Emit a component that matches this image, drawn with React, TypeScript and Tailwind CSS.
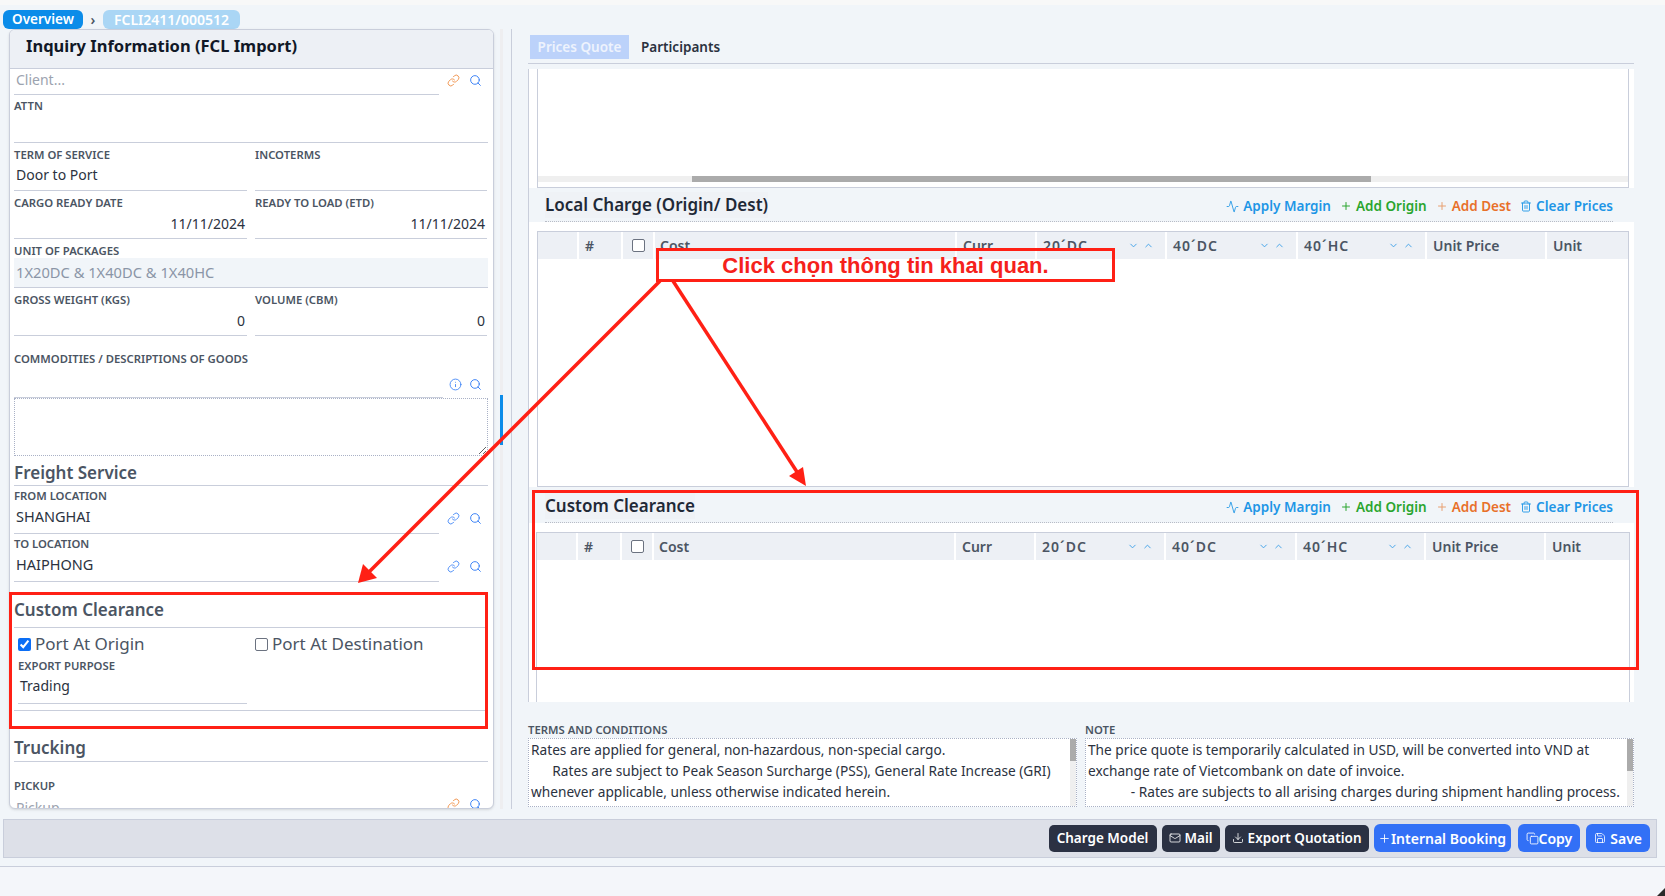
import { Activity, ChevronDown, ChevronUp, Copy, Download, Info, Link, Mail, Plus, Save, Search, Trash2 } from "lucide-react";

const labelCls = "block text-[11.3px] leading-[14px] font-semibold uppercase text-[#4b5563]";
const valueCls = "px-[2px] text-[14px] leading-[20px] text-[#2b3240]";
const titleCls = "text-[17px] leading-[24px] font-semibold text-[#4b5563]";
const cols = "grid grid-cols-[41px_42px_34px_300px_80px_130px_131px_129px_120px_83px]";

function Field({ label, value, right }: { label: string; value?: string; right?: boolean }) {
  return (
    <div className={`h-[48px] border-b border-[#c9cedb] flex flex-col justify-between pt-[5px] ${right ? "pb-[4px]" : "pb-[5px]"}`}>
      <label className={labelCls}>{label}</label>
      <div className={`${valueCls} ${right ? "text-right" : ""}`}>{value}</div>
    </div>
  );
}

function LocationField({ label, value }: { label: string; value: string }) {
  return (
    <div className="flex">
      <div className="w-[425px] h-[48px] border-b border-[#c9cedb] flex flex-col justify-between pt-[3px] pb-[7px]">
        <label className={labelCls}>{label}</label>
        <div className="px-[2px] text-[14.5px] leading-[20px] text-[#2b3240]">{value}</div>
      </div>
      <div className="flex-1 flex items-end justify-center gap-[9px] pb-[9px] pl-[2px] text-[#3b82f6]">
        <Link size={13} strokeWidth={1.6} />
        <Search size={13} strokeWidth={1.8} />
      </div>
    </div>
  );
}

function ContainerHead({ label }: { label: string }) {
  return (
    <div className="flex items-center justify-between pl-[6px] pr-[11px] border-l-2 border-white h-full">
      <span className="tracking-[1px]">{label}</span>
      <span className="flex gap-[4px] text-[#3b9fe8]">
        <ChevronDown size={11} strokeWidth={2} />
        <ChevronUp size={11} strokeWidth={2} />
      </span>
    </div>
  );
}

function SectionHeader({ title }: { title: string }) {
  return (
    <div className="h-[34px] shrink-0 bg-[#f1f5f9] pl-[16px] pr-[21px]">
      <div className="h-full flex items-center justify-between border-b border-dotted border-[#b8bcc6]">
        <h3 className="text-[17px] font-semibold text-[#1f2937] bg-[#eff2f6] leading-[26px]">{title}</h3>
        <div className="flex items-center gap-[9px] text-[13.5px] font-semibold pt-[3px]">
          <span className="flex items-center gap-[4px] text-[#1e96e6]"><Activity size={13} strokeWidth={1.6} />Apply Margin</span>
          <span className="flex items-center gap-[4px] text-[#2aa52e]"><Plus size={12} strokeWidth={2} />Add Origin</span>
          <span className="flex items-center gap-[4px] text-[#e8702a]"><Plus size={12} strokeWidth={2} className="text-[#e8a070]" />Add Dest</span>
          <span className="flex items-center gap-[4px] text-[#1e96e6]"><Trash2 size={12} strokeWidth={1.8} />Clear Prices</span>
        </div>
      </div>
    </div>
  );
}

function ChargeTable() {
  return (
    <div className={`${cols} h-[28px] shrink-0 bg-[#edf0f5] border-t border-[#c9cedb] items-center text-[14px] font-semibold text-[#4b5563]`}>
      <div className="h-full border-r-2 border-white" />
      <div className="pl-[6px]">#</div>
      <div className="h-full flex items-center justify-center border-x-2 border-white">
        <input type="checkbox" className="w-[13px] h-[13px] appearance-none rounded-[2px] border border-[#6b7280] bg-white" />
      </div>
      <div className="pl-[5px]">Cost</div>
      <div className="h-full flex items-center pl-[6px] border-l-2 border-white">Curr</div>
      <ContainerHead label="20´DC" />
      <ContainerHead label="40´DC" />
      <ContainerHead label="40´HC" />
      <div className="h-full flex items-center pl-[6px] border-l-2 border-white">Unit Price</div>
      <div className="h-full flex items-center pl-[6px] border-l-2 border-white">Unit</div>
    </div>
  );
}

function NoteBox({ label, thumb, children }: { label: string; thumb: string; children: React.ReactNode }) {
  return (
    <div className="w-[549px]">
      <label className={labelCls}>{label}</label>
      <div className="h-[69px] mt-[1px] flex bg-white border border-dotted border-[#a9b1c6] overflow-hidden">
        <div className="flex-1 px-[2px] text-[13.7px] leading-[21px] text-[#2b3240] whitespace-pre-wrap">{children}</div>
        <div className="w-[6px] bg-[#efefef] relative">
          <div className={`${thumb} bg-[#ababab]`} />
        </div>
      </div>
    </div>
  );
}

function DarkBtn({ children, className = "" }: { children: React.ReactNode; className?: string }) {
  return <button className={`h-[27px] px-[7px] rounded-[5px] bg-[#2b3143] text-white text-[13.5px] font-semibold flex items-center justify-center gap-[4px] whitespace-nowrap ${className}`}>{children}</button>;
}

function BlueBtn({ children, className = "" }: { children: React.ReactNode; className?: string }) {
  return <button className={`h-[28px] px-[8px] rounded-[6px] bg-[#3270f6] text-white text-[14px] font-semibold flex items-center whitespace-nowrap ${className}`}>{children}</button>;
}

export default function App() {
  return (
    <div className="relative w-full h-[896px] overflow-hidden bg-[#f1f5f9] font-['Noto_Sans',sans-serif]">
      <div className="h-[5px] bg-[#f8f8f8]" />

      {/* breadcrumb */}
      <div className="h-[19px] mt-[5px] pl-[3px] flex items-center text-[13.5px] font-semibold">
        <span className="h-[19px] w-[80px] rounded-[6px] bg-[#0b8ce9] text-white flex items-center justify-center">Overview</span>
        <span className="w-[20px] text-center text-[#4b5563] text-[14px]">›</span>
        <span className="h-[19px] w-[137px] rounded-[6px] bg-[#aad6f5] text-white text-[14px] flex items-center justify-center">FCLI2411/000512</span>
      </div>

      <div className="flex h-[780px]">
        {/* left card */}
        <div className="ml-[9px] w-[485px] shrink-0 bg-white border border-[#c9cedb] rounded-[6px] overflow-hidden shadow-sm">
          <div className="h-[39px] bg-[#edf0f5] border-b border-[#c9cedb] pl-[16px] pb-[5px] flex items-center">
            <h2 className="text-[16.5px] font-bold text-[#111827]">Inquiry Information (FCL Import)</h2>
          </div>
          <div className="px-[4px] pr-[5px]">
            <div className="flex">
              <div className="w-[425px] h-[26px] border-b border-[#c9cedb] px-[2px] text-[14px] leading-[21px] text-[#9ca3af]">Client...</div>
              <div className="flex-1 flex justify-center items-center gap-[9px] pl-[2px] pb-[3px] text-[#3b82f6]">
                <Link size={13} strokeWidth={1.6} className="text-[#ef8a3c]" />
                <Search size={13} strokeWidth={1.8} />
              </div>
            </div>
            <div className="h-[48px] border-b border-[#c9cedb] pt-[4px]">
              <label className={labelCls}>ATTN</label>
            </div>
            <div className="grid grid-cols-[233px_232px] gap-x-[8px]">
              <Field label="Term Of Service" value="Door to Port" />
              <Field label="Incoterms" />
              <Field label="Cargo Ready Date" value="11/11/2024" right />
              <Field label="Ready To Load (ETD)" value="11/11/2024" right />
            </div>
            <div className="h-[49px] pt-[5px]">
              <label className={labelCls}>Unit Of Packages</label>
              <div className="h-[30px] bg-[#f1f5f9] border-b border-[#c9cedb] px-[2px] text-[14.7px] leading-[29px] text-[#8b95a7]">1X20DC &amp; 1X40DC &amp; 1X40HC</div>
            </div>
            <div className="grid grid-cols-[233px_232px] gap-x-[8px]">
              <Field label="Gross Weight (KGS)" value="0" right />
              <Field label="Volume (CBM)" value="0" right />
            </div>
            <div className="h-[121px] pt-[16px]">
              <label className={labelCls}>Commodities / Descriptions Of Goods</label>
              <div className="flex h-[32px]">
                <div className="w-[429px] border-b border-[#c9cedb]" />
                <div className="flex-1 flex items-start justify-center gap-[7px] pt-[12px] text-[#3b82f6]">
                  <Info size={13} strokeWidth={1.6} />
                  <Search size={13} strokeWidth={1.8} />
                </div>
              </div>
              <textarea className="block w-full h-[58px] border border-dotted border-[#a9b1c6] outline-none" />
            </div>
            <h4 className={`${titleCls} h-[29px] pt-[4px] border-b border-[#c9cedb]`}>Freight Service</h4>
            <LocationField label="From Location" value="SHANGHAI" />
            <LocationField label="To Location" value="HAIPHONG" />
            <h4 className={`${titleCls} h-[46px] pt-[16px] border-b border-[#c9cedb]`}>Custom Clearance</h4>
            <div className="h-[83px] border-b border-[#c9cedb]">
              <div className="grid grid-cols-[233px_232px] gap-x-[8px] pt-[5px]">
                <label className="pl-[4px] flex items-center gap-[4px] text-[17px] leading-[22px] text-[#4b5563]">
                  <input type="checkbox" defaultChecked className="w-[13px] h-[13px] accent-[#0b6ef5]" />
                  Port At Origin
                </label>
                <label className="flex items-center gap-[4px] text-[17px] leading-[22px] text-[#4b5563]">
                  <input type="checkbox" className="w-[13px] h-[13px] appearance-none rounded-[2px] border border-[#6b7280] bg-white" />
                  Port At Destination
                </label>
              </div>
              <div className="ml-[4px] w-[229px] h-[45px] mt-[4px] border-b border-[#c9cedb]">
                <label className={labelCls}>Export Purpose</label>
                <div className={`${valueCls} mt-[3px]`}>Trading</div>
              </div>
            </div>
            <h4 className={`${titleCls} h-[51px] pt-[25px] border-b border-[#c9cedb]`}>Trucking</h4>
            <label className={`${labelCls} mt-[17px]`}>Pickup</label>
            <div className="flex mt-[5px]">
              <div className="w-[425px] px-[2px] text-[14px] leading-[20px] text-[#9ca3af]">Pickup</div>
              <div className="flex-1 flex justify-center gap-[9px] pl-[2px] text-[#3b82f6]">
                <Link size={13} strokeWidth={1.6} className="text-[#ef8a3c]" />
                <Search size={13} strokeWidth={1.8} />
              </div>
            </div>
          </div>
        </div>

        {/* splitter */}
        <div className="ml-[6px] w-[12px] shrink-0 border-r border-[#c9cedb] flex">
          <div className="w-[3px] bg-[#eeeef0] pt-[366px]">
            <div className="h-[50px] bg-[#0b8ce9]" />
          </div>
        </div>

        {/* right column */}
        <div className="ml-[16px] w-[1106px] shrink-0 flex flex-col">
          <div className="h-[35px] shrink-0 pt-[6px] flex items-start text-[13.5px] font-semibold border-b border-[#c9cedb]">
            <span className="h-[24px] w-[99px] ml-[2px] bg-[#bcd2fa] text-[#eef3fd] flex items-center justify-center">Prices Quote</span>
            <span className="ml-[12px] h-[24px] flex items-center text-[#2b3240]">Participants</span>
          </div>
          <div className="h-[633px] mt-[5px] shrink-0 bg-white border-l border-[#c9cedb] flex flex-col overflow-hidden">
            <div className="ml-[8px] w-[1092px] h-[119px] shrink-0 border-x border-b border-[#c9cedb] flex flex-col justify-end pb-[5px]">
              <div className="h-[6px] bg-[#efefef] pl-[154px]">
                <div className="h-full w-[679px] bg-[#ababab]" />
              </div>
            </div>
            <SectionHeader title="Local Charge (Origin/ Dest)" />
            <div className="h-[256px] shrink-0 mt-[9px] ml-[8px] w-[1092px] border-x border-b border-[#c9cedb]">
              <ChargeTable />
            </div>
            <div className="h-[2px] shrink-0 bg-[#f1f5f9]" />
            <SectionHeader title="Custom Clearance" />
            <div className="flex-1 mt-[9px] ml-[7px] w-[1094px] border-x border-[#c9cedb]">
              <ChargeTable />
            </div>
          </div>
          <div className="flex mt-[21px] gap-[8px]">
            <NoteBox label="Terms And Conditions" thumb="h-[22px]">
              {"Rates are applied for general, non-hazardous, non-special cargo.\n      Rates are subject to Peak Season Surcharge (PSS), General Rate Increase (GRI)\nwhenever applicable, unless otherwise indicated herein."}
            </NoteBox>
            <NoteBox label="Note" thumb="h-[32px]">
              {"The price quote is temporarily calculated in USD, will be converted into VND at\nexchange rate of Vietcombank on date of invoice.\n            - Rates are subjects to all arising charges during shipment handling process."}
            </NoteBox>
          </div>
        </div>
      </div>

      {/* action bar */}
      <div className="ml-[3px] mr-[8px] h-[39px] mt-[10px] pb-[1px] bg-[#dde0e8] border border-[#c9cedb] flex items-center justify-end gap-[5px] pr-[6px]">
        <DarkBtn className="w-[108px]">Charge Model</DarkBtn>
        <DarkBtn><Mail size={12} strokeWidth={1.6} />Mail</DarkBtn>
        <DarkBtn><Download size={12} strokeWidth={1.6} />Export Quotation</DarkBtn>
        <BlueBtn className="w-[137px] justify-center mr-[1px]"><Plus size={13} strokeWidth={1.6} className="shrink-0" />Internal Booking</BlueBtn>
        <BlueBtn className="ml-[1px]"><Copy size={13} strokeWidth={1.6} />Copy</BlueBtn>
        <BlueBtn className="ml-[1px] gap-[4px]"><Save size={12} strokeWidth={1.6} />Save</BlueBtn>
      </div>
      <div className="mt-[8px] h-[30px] border-t border-[#c9cedb] bg-[#f4f6fa]" />

      {/* annotations */}
      <div className="absolute left-[656px] top-[248px] w-[459px] h-[34px] border-[3px] border-[#ff2015] flex items-center justify-center font-['Liberation_Sans',sans-serif] font-bold text-[22px] text-[#f5211b]">
        Click chọn thông tin khai quan.
      </div>
      <div className="absolute left-[9px] top-[592px] w-[479px] h-[137px] border-[3px] border-[#ff2015]" />
      <div className="absolute left-[532px] top-[490px] w-[1107px] h-[180px] border-[3px] border-[#ff2015]" />
      <svg className="absolute left-0 top-0 pointer-events-none" width="1665" height="896" fill="none">
        <line x1="660" y1="281" x2="366" y2="575" stroke="#ff2015" strokeWidth="3.5" />
        <polygon points="358,583 363,564 377,578" fill="#ff2015" />
        <line x1="673" y1="281" x2="799" y2="475" stroke="#ff2015" strokeWidth="3.5" />
        <polygon points="806,486 789,476 803,467" fill="#ff2015" />
      </svg>
      <div className="absolute right-0 bottom-0 w-[8px] h-[8px] bg-[#2a2a2a] [clip-path:polygon(100%_0,100%_100%,0_100%)]" />
    </div>
  );
}
